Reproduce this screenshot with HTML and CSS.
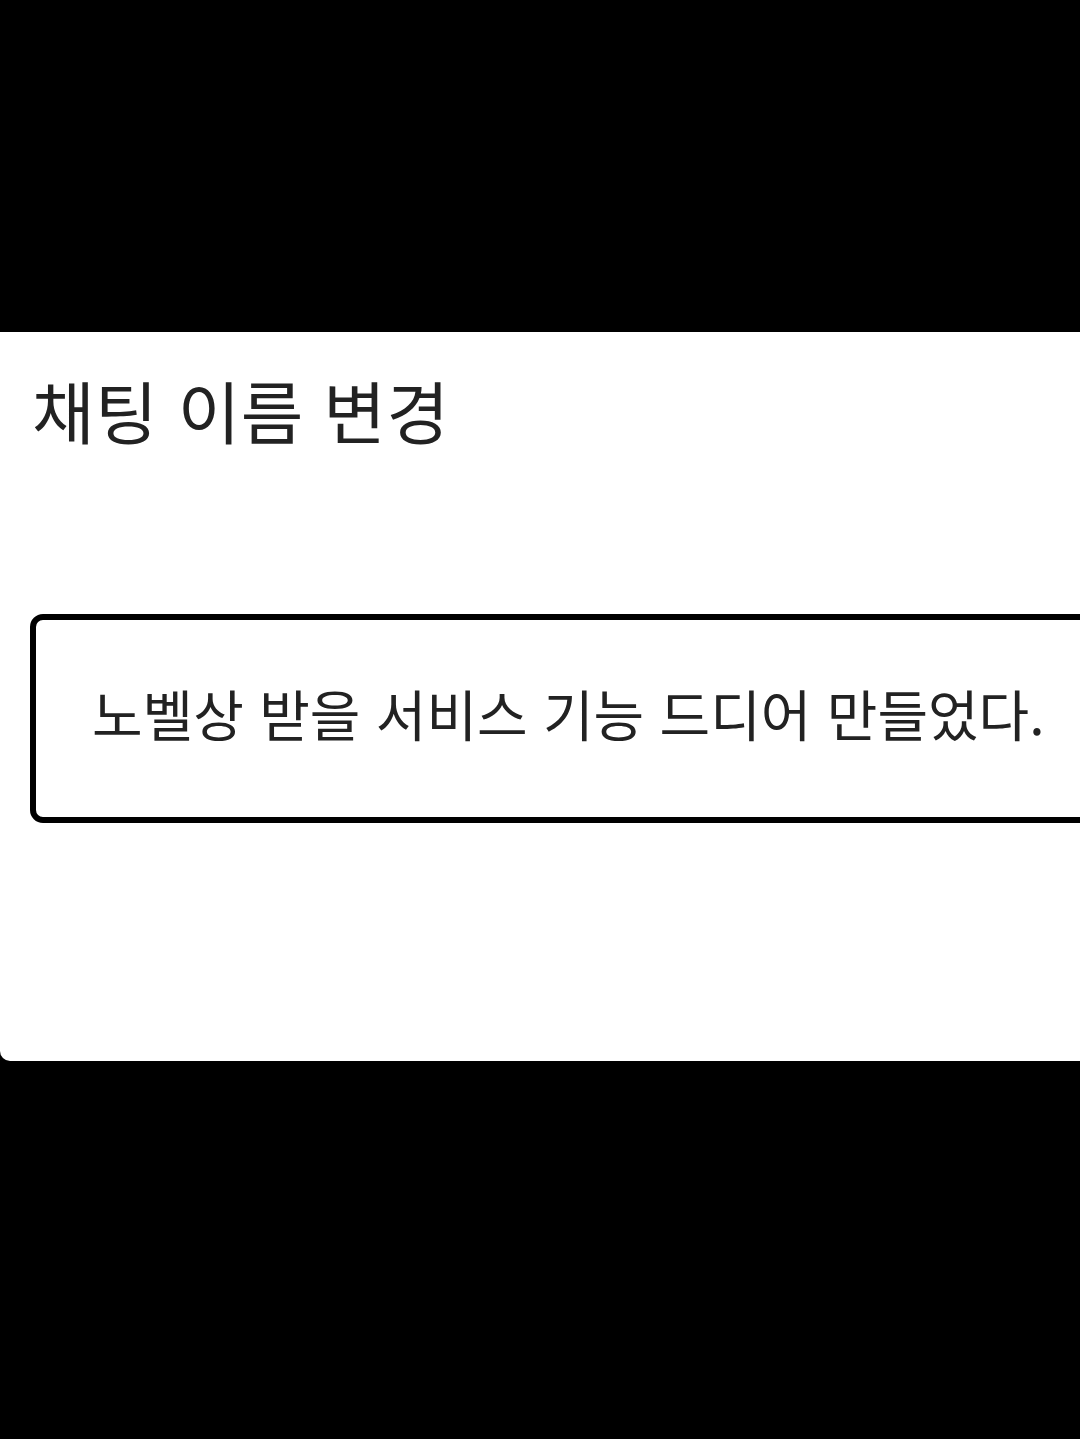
FILE: index.html
```html
<!DOCTYPE html>
<html lang="ko">
<head>
  <meta charset="UTF-8" />
  <meta name="viewport" content="width=device-width, initial-scale=1.0" />
  <title>채팅 이름 변경</title>
  <link rel="stylesheet" href="styles.css">
</head>
<body>
  <div class="sheet">
    <h2 class="sheet-title">채팅 이름 변경</h2>
    <div class="name-field">
      <input type="text" id="chatName" value="노벨상 받을 서비스 기능 드디어 만들었다." />
    </div>
  </div>
</body>
</html>
```

FILE: styles.css
```css
html, body {
  margin: 0;
  padding: 0;
}

body {
  font-family: "Noto Sans CJK KR", "Noto Sans", sans-serif;
  background: #000;
  height: 1439px;
  overflow: hidden;
}

.sheet {
  margin-top: 332px;
  height: 729px;
  background: #fff;
  border-radius: 0 0 0 10px;
  padding-left: 30px;
  overflow: hidden;
  box-sizing: border-box;
}

.sheet-title {
  margin: 0;
  padding-top: 28px;
  padding-left: 2px;
  font-size: 68px;
  font-weight: 400;
  color: #222;
  line-height: 100px;
  letter-spacing: 0.5px;
}

.name-field {
  margin-top: 154px;
  width: 1100px;
}

.name-field input {
  display: block;
  width: 100%;
  height: 209px;
  box-sizing: border-box;
  border: 6px solid #000;
  border-radius: 13px;
  padding: 0 0 14px 56px;
  font-family: inherit;
  font-size: 55px;
  color: #222;
  background: #fff;
  outline: none;
}
```
